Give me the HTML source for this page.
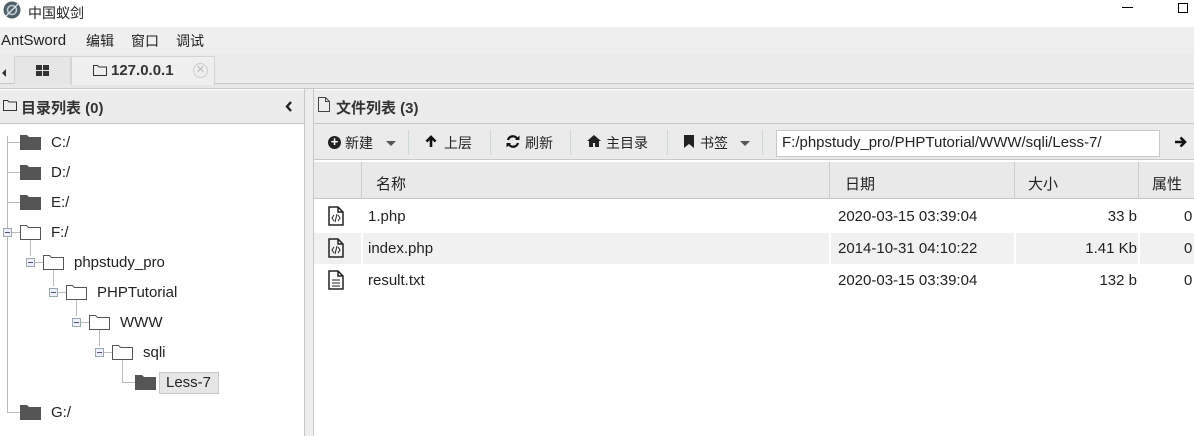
<!DOCTYPE html>
<html><head><meta charset="utf-8"><style>
*{margin:0;padding:0;box-sizing:border-box}
body{width:1194px;height:436px;overflow:hidden;background:#fff;font-family:"Liberation Sans","Noto Sans CJK SC",sans-serif;font-size:15px;color:#222;position:relative}
.a{position:absolute}
.t{position:absolute;white-space:nowrap}
.fold{position:absolute;width:21px;height:15px}
.tl{position:absolute;background:#bbb}
.pm{position:absolute;width:9px;height:9px;border:1px solid #9aa;background:#eef;}
.pm:after{content:"";position:absolute;left:1px;top:3px;width:5px;height:1px;background:#556}
.m{line-height:20px;top:31px}
</style></head><body>
<div class="a" style="left:0;top:0;width:1194px;height:27px;background:#fff"></div>
<svg class="a" style="left:3px;top:1px" width="18" height="18" viewBox="0 0 18 18"><circle cx="9" cy="9" r="8.5" fill="#4f5f68"/><circle cx="9" cy="9" r="4.5" fill="none" stroke="#bcc" stroke-width="1.6"/><path d="M3 15 L16 2" stroke="#dde" stroke-width="1.4"/></svg>
<div class="t" style="left:28px;top:3px;font-size:14px">中国蚁剑</div>
<div class="a" style="left:1122px;top:7px;width:11px;height:1px;background:#000"></div>
<div class="a" style="left:1178px;top:3px;width:10px;height:10px;border:1px solid #000"></div>
<div class="a" style="left:0;top:27px;width:1194px;height:27px;background:#efefef"></div>
<div class="t m" style="left:1px">AntSword</div>
<div class="t m" style="left:86px;font-size:14px">编辑</div>
<div class="t m" style="left:131px;font-size:14px">窗口</div>
<div class="t m" style="left:176px;font-size:14px">调试</div>
<div class="a" style="left:0;top:54px;width:1194px;height:30px;background:#ececec;border-bottom:1px solid #c8c8c8"></div>
<div class="a" style="left:0;top:84px;width:1194px;height:5px;background:#e8e8e8;border-bottom:1px solid #c8c8c8"></div>
<div class="a" style="left:2px;top:69px;width:0;height:0;border-top:4px solid transparent;border-bottom:4px solid transparent;border-right:4px solid #333"></div>
<div class="a" style="left:14px;top:56px;width:57px;height:28px;background:#e6e6e6;border:1px solid #d4d4d4;border-bottom:none"></div>
<div class="a" style="left:36px;top:65px;width:6px;height:5px;background:#333"></div><div class="a" style="left:43px;top:65px;width:6px;height:5px;background:#333"></div>
<div class="a" style="left:36px;top:71px;width:6px;height:5px;background:#333"></div><div class="a" style="left:43px;top:71px;width:6px;height:5px;background:#333"></div>
<div class="a" style="left:71px;top:56px;width:144px;height:29px;background:#efefef;border:1px solid #d4d4d4;border-bottom:none"></div>
<svg class="a" style="left:93px;top:64px" width="14" height="12"><path d="M0.5 1.5h4l1.5 1.5h7.5v8.5h-13z" fill="none" stroke="#333"/></svg>
<div class="t" style="left:111px;top:62px;font-weight:bold;color:#333">127.0.0.1</div>
<div class="a" style="left:193px;top:63px;width:15px;height:15px;border-radius:50%;border:1px solid #ccc;background:#eee;color:#bbb;font-size:11px;line-height:13px;text-align:center">✕</div>
<div class="a" style="left:0;top:89px;width:305px;height:347px;border-right:1px solid #c8c8c8"></div>
<div class="a" style="left:0;top:90px;width:304px;height:34px;background:#ececec;border-bottom:1px solid #c8c8c8"></div>
<svg class="a" style="left:3px;top:99px" width="14" height="12"><path d="M0.5 1.5h4l1.5 1.5h7.5v8.5h-13z" fill="none" stroke="#333"/></svg>
<div class="t" style="left:21px;top:97px;font-weight:bold;color:#333">目录列表 (0)</div>
<svg class="a" style="left:285px;top:101px" width="8" height="11"><path d="M6 1L2 5.5 6 10" fill="none" stroke="#222" stroke-width="2.4"/></svg>
<div class="a" style="left:305px;top:89px;width:8px;height:347px;background:#eee"></div>
<div class="tl" style="left:7px;top:136px;width:1px;height:276px"></div>
<div class="tl" style="left:7px;top:142px;width:13px;height:1px"></div>
<div class="tl" style="left:7px;top:172px;width:13px;height:1px"></div>
<div class="tl" style="left:7px;top:202px;width:13px;height:1px"></div>
<div class="tl" style="left:7px;top:412px;width:13px;height:1px"></div>
<div class="tl" style="left:30px;top:238px;width:1px;height:18px"></div>
<div class="tl" style="left:53px;top:268px;width:1px;height:18px"></div>
<div class="tl" style="left:76px;top:298px;width:1px;height:18px"></div>
<div class="tl" style="left:99px;top:328px;width:1px;height:18px"></div>
<div class="tl" style="left:122px;top:358px;width:1px;height:24px"></div>
<div class="tl" style="left:122px;top:382px;width:13px;height:1px"></div>
<div class="tl" style="left:9px;top:232px;width:11px;height:1px"></div>
<div class="tl" style="left:32px;top:262px;width:11px;height:1px"></div>
<div class="tl" style="left:55px;top:292px;width:11px;height:1px"></div>
<div class="tl" style="left:78px;top:322px;width:11px;height:1px"></div>
<div class="tl" style="left:101px;top:352px;width:11px;height:1px"></div>
<div class="pm" style="left:3px;top:228px"></div>
<div class="pm" style="left:26px;top:258px"></div>
<div class="pm" style="left:49px;top:288px"></div>
<div class="pm" style="left:72px;top:318px"></div>
<div class="pm" style="left:95px;top:348px"></div>
<svg class="fold" style="left:20px;top:135px" viewBox="0 0 21 15"><path d="M0 0h7l2 2h12v13h-21z" fill="#555"/></svg>
<svg class="fold" style="left:20px;top:165px" viewBox="0 0 21 15"><path d="M0 0h7l2 2h12v13h-21z" fill="#555"/></svg>
<svg class="fold" style="left:20px;top:195px" viewBox="0 0 21 15"><path d="M0 0h7l2 2h12v13h-21z" fill="#555"/></svg>
<svg class="fold" style="left:20px;top:405px" viewBox="0 0 21 15"><path d="M0 0h7l2 2h12v13h-21z" fill="#555"/></svg>
<svg class="fold" style="left:135px;top:375px" viewBox="0 0 21 15"><path d="M0 0h7l2 2h12v13h-21z" fill="#555"/></svg>
<svg class="fold" style="left:20px;top:225px" viewBox="0 0 21 15"><path d="M0.5 0.5h6l2 2h12v12h-20z" fill="#fff" stroke="#555"/></svg>
<svg class="fold" style="left:43px;top:255px" viewBox="0 0 21 15"><path d="M0.5 0.5h6l2 2h12v12h-20z" fill="#fff" stroke="#555"/></svg>
<svg class="fold" style="left:66px;top:285px" viewBox="0 0 21 15"><path d="M0.5 0.5h6l2 2h12v12h-20z" fill="#fff" stroke="#555"/></svg>
<svg class="fold" style="left:89px;top:315px" viewBox="0 0 21 15"><path d="M0.5 0.5h6l2 2h12v12h-20z" fill="#fff" stroke="#555"/></svg>
<svg class="fold" style="left:112px;top:345px" viewBox="0 0 21 15"><path d="M0.5 0.5h6l2 2h12v12h-20z" fill="#fff" stroke="#555"/></svg>
<div class="t" style="left:51px;top:134px">C:/</div>
<div class="t" style="left:51px;top:164px">D:/</div>
<div class="t" style="left:51px;top:194px">E:/</div>
<div class="t" style="left:51px;top:224px">F:/</div>
<div class="t" style="left:74px;top:254px">phpstudy_pro</div>
<div class="t" style="left:97px;top:284px">PHPTutorial</div>
<div class="t" style="left:120px;top:314px">WWW</div>
<div class="t" style="left:143px;top:344px">sqli</div>
<div class="a" style="left:159px;top:372px;width:60px;height:22px;background:#e6e6e6;border:1px solid #c8c8c8"></div>
<div class="t" style="left:166px;top:374px">Less-7</div>
<div class="t" style="left:51px;top:404px">G:/</div>
<div class="a" style="left:313px;top:89px;width:881px;height:347px;border-left:1px solid #c8c8c8"></div>
<div class="a" style="left:314px;top:90px;width:880px;height:34px;background:#ececec;border-bottom:1px solid #c8c8c8"></div>
<svg class="a" style="left:318px;top:97px" width="12" height="15"><path d="M0.5 0.5h7l4 4v10h-11z M7.5 0.5v4h4" fill="none" stroke="#444"/></svg>
<div class="t" style="left:336px;top:97px;font-weight:bold;color:#333">文件列表 (3)</div>
<div class="a" style="left:314px;top:124px;width:880px;height:36px;background:#ebebeb;border-bottom:1px solid #c8c8c8"></div>
<div class="a" style="left:328px;top:136px;width:13px;height:13px;border-radius:50%;background:#222"></div>
<div class="t" style="left:328px;top:134px;width:13px;text-align:center;color:#fff;font-weight:bold;font-size:13px;line-height:15px">+</div>
<div class="t" style="left:345px;top:133px;font-size:14px">新建</div>
<div class="a" style="left:386px;top:141px;border-left:5px solid transparent;border-right:5px solid transparent;border-top:5px solid #555"></div>
<div class="a" style="left:408px;top:130px;width:1px;height:25px;background:#cdd8dd"></div>
<svg class="a" style="left:425px;top:135px" width="12" height="13"><path d="M6 12V2 M1.5 6.5L6 2l4.5 4.5" fill="none" stroke="#111" stroke-width="2.6"/></svg>
<div class="t" style="left:444px;top:133px;font-size:14px">上层</div>
<div class="a" style="left:490px;top:130px;width:1px;height:25px;background:#cdd8dd"></div>
<svg class="a" style="left:506px;top:135px" width="14" height="13" viewBox="0 0 14 13"><path d="M11.5 4.5A5 5 0 0 0 2 5 M2.5 8.5A5 5 0 0 0 12 8" fill="none" stroke="#111" stroke-width="2.3"/><path d="M9 5h4.5V0.5z M5 8H0.5v4.5z" fill="#111"/></svg>
<div class="t" style="left:525px;top:133px;font-size:14px">刷新</div>
<div class="a" style="left:570px;top:130px;width:1px;height:25px;background:#cdd8dd"></div>
<svg class="a" style="left:587px;top:135px" width="14" height="12"><path d="M7 0L0 6h2v6h4v-4h2v4h4v-6h2z" fill="#222"/></svg>
<div class="t" style="left:606px;top:133px;font-size:14px">主目录</div>
<div class="a" style="left:667px;top:130px;width:1px;height:25px;background:#cdd8dd"></div>
<svg class="a" style="left:684px;top:135px" width="10" height="13"><path d="M0 0h10v13l-5-4-5 4z" fill="#222"/></svg>
<div class="t" style="left:700px;top:133px;font-size:14px">书签</div>
<div class="a" style="left:740px;top:141px;border-left:5px solid transparent;border-right:5px solid transparent;border-top:5px solid #555"></div>
<div class="a" style="left:762px;top:130px;width:1px;height:25px;background:#cdd8dd"></div>
<div class="a" style="left:776px;top:130px;width:384px;height:27px;background:#fff;border:1px solid #c8c8c8"></div>
<div class="t" style="left:782px;top:134px">F:/phpstudy_pro/PHPTutorial/WWW/sqli/Less-7/</div>
<svg class="a" style="left:1174px;top:136px" width="13" height="12"><path d="M1 6h10 M6.5 1.5L11 6l-4.5 4.5" fill="none" stroke="#111" stroke-width="2.6"/></svg>
<div class="a" style="left:314px;top:162px;width:880px;height:37px;background:#e9e9e9;border-bottom:1px solid #c8c8c8"></div>
<div class="a" style="left:361px;top:162px;width:1px;height:37px;background:#ccc"></div>
<div class="a" style="left:829px;top:162px;width:1px;height:37px;background:#ccc"></div>
<div class="a" style="left:1014px;top:162px;width:1px;height:37px;background:#ccc"></div>
<div class="a" style="left:1138px;top:162px;width:1px;height:37px;background:#ccc"></div>
<div class="t" style="left:376px;top:173px;font-size:15px">名称</div>
<div class="t" style="left:845px;top:173px;font-size:15px">日期</div>
<div class="t" style="left:1028px;top:173px;font-size:15px">大小</div>
<div class="t" style="left:1152px;top:173px;font-size:15px">属性</div>
<div class="a" style="left:314px;top:233px;width:880px;height:31px;background:#f1f1f1"></div>
<div class="a" style="left:361px;top:233px;width:2px;height:31px;background:#fff"></div>
<div class="a" style="left:829px;top:233px;width:2px;height:31px;background:#fff"></div>
<div class="a" style="left:1014px;top:233px;width:2px;height:31px;background:#fff"></div>
<div class="a" style="left:1138px;top:233px;width:2px;height:31px;background:#fff"></div>
<svg class="a" style="left:328px;top:206px" width="16" height="20"><path d="M1 1h9l5 5v13h-14z M10 1v5h5" fill="none" stroke="#222" stroke-width="1.5"/><path d="M6 9l-2 3 2 3 M10 9l2 3-2 3 M9 8l-2 8" fill="none" stroke="#222"/></svg>
<svg class="a" style="left:328px;top:238px" width="16" height="20"><path d="M1 1h9l5 5v13h-14z M10 1v5h5" fill="none" stroke="#222" stroke-width="1.5"/><path d="M6 9l-2 3 2 3 M10 9l2 3-2 3 M9 8l-2 8" fill="none" stroke="#222"/></svg>
<svg class="a" style="left:328px;top:270px" width="16" height="20"><path d="M1 1h9l5 5v13h-14z M10 1v5h5" fill="none" stroke="#222" stroke-width="1.5"/><path d="M4 10h8M4 13h8M4 16h8" stroke="#222"/></svg>
<div class="t" style="left:368px;top:208px">1.php</div>
<div class="t" style="left:368px;top:240px">index.php</div>
<div class="t" style="left:368px;top:272px">result.txt</div>
<div class="t" style="left:838px;top:208px">2020-03-15 03:39:04</div>
<div class="t" style="left:838px;top:240px">2014-10-31 04:10:22</div>
<div class="t" style="left:838px;top:272px">2020-03-15 03:39:04</div>
<div class="t" style="left:1014px;top:208px;width:123px;text-align:right">33 b</div>
<div class="t" style="left:1014px;top:240px;width:123px;text-align:right">1.41 Kb</div>
<div class="t" style="left:1014px;top:272px;width:123px;text-align:right">132 b</div>
<div class="t" style="left:1184px;top:208px">0</div>
<div class="t" style="left:1184px;top:240px">0</div>
<div class="t" style="left:1184px;top:272px">0</div>
</body></html>
